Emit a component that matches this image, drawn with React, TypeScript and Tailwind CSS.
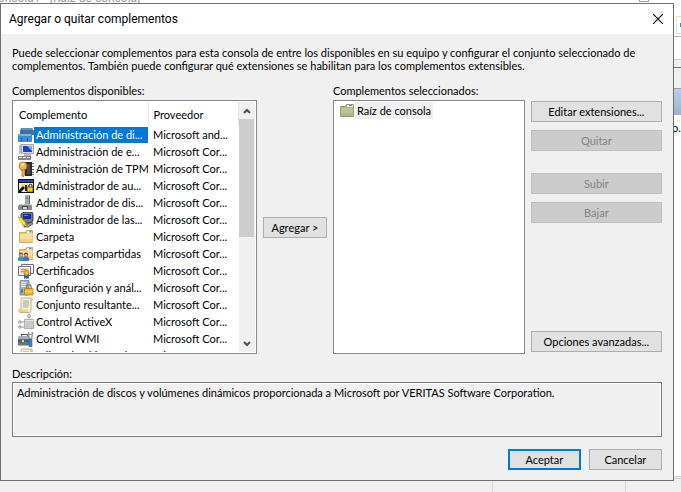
import type { ReactNode } from "react";

function Icon({ children }: { children: ReactNode }) {
  return (
    <svg viewBox="0 0 16 16" className="size-4 shrink-0" aria-hidden="true">
      {children}
    </svg>
  );
}

const DiskIcon = () => (
  <Icon>
    <path d="M3 1h11l2 3v4H2V4z" fill="#3f7396" />
    <path d="M3 1h11l1 2H2.500z" fill="#5b93b5" />
    <rect x="0" y="7" width="14" height="8" rx="1" fill="#3b8fd0" />
    <rect x="1" y="7" width="12" height="2" fill="#6fb8ea" />
    <rect x="3" y="11" width="1" height="3" fill="#1d5f9a" />
    <rect x="9" y="11" width="1" height="3" fill="#1d5f9a" />
  </Icon>
);

const ComputerIcon = () => (
  <Icon>
    <path d="M1 1l3-1v9l-3 1z" fill="#b9bdc0" />
    <rect x="3.500" y="0.500" width="12" height="9" fill="#d9dde0" stroke="#a5a9ad" />
    <rect x="5" y="2" width="9" height="6" fill="#1c3fc4" />
    <path d="M9 2h5v5z" fill="#7fa4f4" />
    <rect x="6" y="10" width="7" height="2" fill="#b5b9bd" />
    <rect x="0" y="12" width="13" height="4" fill="#85898d" />
    <path d="M1 13h3v1H1zM5 13h3v1H5zM9 13h3v1H9z" fill="#e2e4e6" />
  </Icon>
);

const TpmIcon = () => (
  <Icon>
    <rect x="7" y="1" width="7" height="14" fill="#2a2a2a" />
    <path d="M9 3h3v10H9z" fill="#4c4c4c" />
    <path d="M14 2h2v1h-2zM14 5h2v1h-2zM14 8h2v1h-2zM14 11h2v1h-2zM14 13h2v1h-2z" fill="#666" />
    <path d="M3.500 7h3v7l-1.500 2-1.500-1.500 1-1-1-1 1-1-1-1z" fill="#f0a62c" stroke="#a8651a" strokeWidth=".6" />
    <circle cx="5" cy="5" r="4" fill="#f6b540" stroke="#b16d1c" strokeWidth=".8" />
    <circle cx="4.500" cy="3.500" r="1.200" fill="#fff" />
  </Icon>
);

const AuthorizationIcon = () => (
  <Icon>
    <rect x="0" y="1" width="16" height="14" fill="#111" />
    <rect x="1" y="2" width="14" height="2" fill="#2741c8" />
    <rect x="1" y="5" width="14" height="9" fill="#f4f0c4" />
    <path d="M1 12l4-4 2 2-4 4H1z" fill="#111" />
    <path d="M4 6l2 1-2 2z" fill="#e8c800" />
    <path d="M11 9V7a2 2 0 0 1 3 0v2" fill="none" stroke="#222" />
    <rect x="9" y="9" width="6" height="5" fill="#f5cf1c" stroke="#332d00" strokeWidth=".7" />
    <path d="M7 7h2v6H7z" fill="#222" />
  </Icon>
);

const DeviceIcon = () => (
  <Icon>
    <path d="M7 0h4l1 1v9H7z" fill="#a2a6a7" />
    <path d="M11 0l1 1v9h-1z" fill="#5f6465" />
    <rect x="8" y="2" width="2" height="2" fill="#20bb54" />
    <path d="M2 9h11l1 2v4H0v-4z" fill="#8b8f90" />
    <path d="M2 9h11v1H1z" fill="#c4c7c8" />
    <rect x="4" y="11" width="6" height="3" fill="#3e4243" />
    <rect x="5" y="12" width="4" height="2" fill="#d4d6d6" />
  </Icon>
);

const PolicyIcon = () => (
  <Icon>
    <path d="M3 2l3-2h8l1 2v7l-3 2H5L3 9z" fill="#777b86" stroke="#20222b" strokeWidth=".8" />
    <path d="M5 2h8v5H5z" fill="#1828a8" />
    <path d="M6 3h4v1H6z" fill="#5e7df0" />
    <path d="M6 13l8-3 1 2-5 3H6z" fill="#8f929b" stroke="#222" strokeWidth=".6" />
    <path d="M0 5l5 1-1 1 4 4-1 1 4 3-7-2 1-1-4-4 1-1z" fill="#ffe81a" stroke="#8d7a00" strokeWidth=".5" />
  </Icon>
);

const FolderShape = () => (
  <>
    <path d="M1.500 3.500h6l1-2h6v12h-13z" fill="#edc673" stroke="#c79b4c" strokeWidth=".8" />
    <path d="M9.500 2h4v2h-4z" fill="#fff" />
    <path d="M11 2h2.500v1.500H11z" fill="#4c9be0" />
    <path d="M2 5h6l1-1h5.500v9H2z" fill="#f8df9f" />
    <path d="M2 10h12.500v3H2z" fill="#f1cf86" />
  </>
);

const FolderIcon = () => (
  <Icon>
    <FolderShape />
  </Icon>
);

const SharedFolderIcon = () => (
  <Icon>
    <FolderShape />
    <path d="M0 15v-3l2-2h2l2 2v3z" fill="#3f9aa8" />
    <path d="M5 15v-3l2-2h2l2 2v3z" fill="#3b78b8" />
    <circle cx="3" cy="8.500" r="2" fill="#7d4f32" />
    <circle cx="3" cy="9.200" r="1.200" fill="#e9b890" />
    <circle cx="8" cy="8.500" r="2" fill="#5e3d2b" />
    <circle cx="8" cy="9.200" r="1.200" fill="#e9b890" />
  </Icon>
);

const CertificateIcon = () => (
  <Icon>
    <path d="M3.500 1.500h12v9h-12z" fill="#f4f4f2" stroke="#6a6f86" />
    <path d="M.5 3.500h12v9H.5z" fill="#fff" stroke="#6a6f86" />
    <path d="M2 5h9v6H2z" fill="#e9ddb3" />
    <path d="M3 6h6v1H3zM3 8h3v1H3z" fill="#b89a55" />
    <path d="M6 11l3 1v4l-1.500-1L6 16zM9 11l2 0v5l-1-1-1 1z" fill="#2465c8" />
    <circle cx="8.500" cy="9.800" r="2.600" fill="#f3a21d" stroke="#b87410" strokeWidth=".6" />
    <circle cx="8.500" cy="9.800" r="1" fill="#ffd765" />
  </Icon>
);

const ServerLockIcon = () => (
  <Icon>
    <path d="M2 1l2-1h6l1 1v13l-1 1H2z" fill="#9fb2bd" stroke="#5b6c77" strokeWidth=".7" />
    <path d="M3 2h5v1H3zM3 4h5v1H3zM3 6h5v1H3z" fill="#e8f0f3" />
    <path d="M3 9h2v4H3z" fill="#657985" />
    <path d="M8.500 9V7a2.300 2.300 0 0 1 4.600 0v2" fill="none" stroke="#8b8169" strokeWidth="1.300" />
    <rect x="6.500" y="8.500" width="8.500" height="6.500" rx=".7" fill="#f0b72d" stroke="#a97412" strokeWidth=".8" />
    <path d="M7 11h8v1H7z" fill="#ffda70" />
  </Icon>
);

const ScrollIcon = () => (
  <Icon>
    <path d="M4 1h9c2 0 2 3 0 3v9c0 2-1 2.500-2 2.500H2C0 15 1 12 2 12h1V3c0-1 0-2 1-2z" fill="#fbf2cc" stroke="#b79f62" strokeWidth=".8" />
    <path d="M12 1.500c2 0 2.500 2.500.5 2.500z" fill="#d7bd79" />
    <path d="M2 12.500h8v2.500H2z" fill="#e8d397" />
    <path d="M5 4h6M5 6h6M5 8h6M5 10h5" stroke="#8e96b8" strokeWidth=".9" />
  </Icon>
);

const ActiveXIcon = () => (
  <Icon>
    <path d="M11 3v3M2 8h5M2 13h5" stroke="#9a9a9a" />
    <rect x="6.500" y="5.500" width="9" height="9" fill="#cbcbcb" stroke="#b0b0b0" />
    <path d="M7 6h8v1H7z" fill="#e5e5e5" />
    <circle cx="11" cy="2" r="1.500" fill="#ddd" stroke="#8f8f8f" strokeWidth=".8" />
    <circle cx="1.800" cy="8" r="1.300" fill="#ddd" stroke="#8f8f8f" strokeWidth=".8" />
    <circle cx="1.800" cy="13" r="1.300" fill="#ddd" stroke="#8f8f8f" strokeWidth=".8" />
  </Icon>
);

const ToolboxIcon = () => (
  <Icon>
    <path d="M3.500 5V3.500h6V5" fill="none" stroke="#555c63" strokeWidth="1.200" />
    <path d="M0 6l2-1h10l2 1v8.500H0z" fill="#66727c" />
    <path d="M0 6l2-1h10l2 1v2H0z" fill="#a2afb8" />
    <path d="M0 9.500h14v1H0z" fill="#3f4a53" />
    <path d="M4 9h2v2H4z" fill="#d3d9dd" />
    <path d="M11 1a2.500 2.500 0 0 0 0 4v3h3V5a2.500 2.500 0 0 0 0-4v2.500h-3z" fill="#d7dde1" stroke="#69737b" strokeWidth=".7" />
    <rect x="11" y="8" width="3" height="8" rx="1" fill="#3b86d2" stroke="#1f5b9e" strokeWidth=".6" />
  </Icon>
);

const ConsoleFolderIcon = () => (
  <Icon>
    <path d="M1.500 3.500h5l1-2h7v12h-13z" fill="#b6b88c" stroke="#8f9270" strokeWidth=".9" />
    <path d="M8 2h6v2H8z" fill="#dfe8ea" />
    <path d="M10 2h3v1h-3z" fill="#3f93d8" />
    <path d="M2 5h12v8H2z" fill="#bcc39a" />
    <path d="M2 10h12v3H2z" fill="#b3b78a" />
  </Icon>
);

const MS = "Microsoft Cor...";

const snapIns = [
  { name: "Administración de di...", vendor: "Microsoft and...", icon: <DiskIcon />, selected: true },
  { name: "Administración de e...", vendor: MS, icon: <ComputerIcon /> },
  { name: "Administración de TPM", vendor: MS, icon: <TpmIcon /> },
  { name: "Administrador de au...", vendor: MS, icon: <AuthorizationIcon /> },
  { name: "Administrador de dis...", vendor: MS, icon: <DeviceIcon /> },
  { name: "Administrador de las...", vendor: MS, icon: <PolicyIcon /> },
  { name: "Carpeta", vendor: MS, icon: <FolderIcon /> },
  { name: "Carpetas compartidas", vendor: MS, icon: <SharedFolderIcon /> },
  { name: "Certificados", vendor: MS, icon: <CertificateIcon /> },
  { name: "Configuración y anál...", vendor: MS, icon: <ServerLockIcon /> },
  { name: "Conjunto resultante...", vendor: MS, icon: <ScrollIcon /> },
  { name: "Control ActiveX", vendor: MS, icon: <ActiveXIcon /> },
  { name: "Control WMI", vendor: MS, icon: <ToolboxIcon /> },
  { name: "Editor de objetos de...", vendor: MS, icon: <ScrollIcon /> },
];

function PushButton({ children, disabled, primary }: { children: ReactNode; disabled?: boolean; primary?: boolean }) {
  const look = disabled
    ? "border border-[#bfbfbf] bg-[#cccccc] text-[#838383]"
    : primary
      ? "border-2 border-[#0078d7] bg-[#e1e1e1]"
      : "border border-[#adadad] bg-[#e1e1e1]";
  return (
    <button type="button" disabled={disabled} className={`flex h-[21px] w-full items-center justify-center whitespace-nowrap ${look}`}>
      {children}
    </button>
  );
}

function ScrollArrow({ label, d }: { label: string; d: string }) {
  return (
    <button type="button" aria-label={label} className="flex h-[17px] shrink-0 items-center justify-center">
      <svg viewBox="0 0 8 6" className="h-[6px] w-2">
        <path d={d} fill="none" stroke="#505050" strokeWidth="2" />
      </svg>
    </button>
  );
}

function AvailableList() {
  return (
    <div className="flex h-[254px] overflow-hidden border border-[#828790] bg-white p-px">
      <div className="min-w-0 grow overflow-hidden">
        <table aria-labelledby="available" className="w-full table-fixed border-collapse whitespace-nowrap text-left">
          <thead>
            <tr className="h-6">
              <th className="w-[134px] border-r border-[#e5e5e5] p-0 pl-[5px] font-normal">Complemento</th>
              <th className="border-r border-[#e5e5e5] p-0 pl-[5px] font-normal">Proveedor</th>
            </tr>
          </thead>
          <tbody>
            {snapIns.map((s) => (
              <tr key={s.name} className="h-[17px]" aria-selected={s.selected}>
                <td className="overflow-hidden p-0">
                  <div className="flex h-[17px] items-center pl-1">
                    {s.icon}
                    <span className={`flex h-4 grow items-center pl-0.5 ${s.selected ? "bg-[#0078d7] text-white" : ""}`}>
                      {s.name}
                    </span>
                  </div>
                </td>
                <td className="overflow-hidden p-0 pl-[5px]">{s.vendor}</td>
              </tr>
            ))}
          </tbody>
        </table>
      </div>
      <div className="flex w-4 shrink-0 flex-col bg-[#f0f0f0]">
        <ScrollArrow label="Desplazar hacia arriba" d="M1 5l3-3 3 3" />
        <div className="mr-px h-[118px] bg-[#cdcdcd]" />
        <div className="grow" />
        <ScrollArrow label="Desplazar hacia abajo" d="M1 1l3 3 3-3" />
      </div>
    </div>
  );
}

function Dialog() {
  return (
    <section role="dialog" aria-labelledby="title" className="min-w-0 grow border border-[#6e6e6e] bg-[#f0f0f0]">
      <header className="flex h-[30px] items-center justify-between bg-white pl-2 pr-2.5">
        <h1 id="title" className="font-['Roboto',sans-serif] text-[12px]">
          Agregar o quitar complementos
        </h1>
        <button type="button" aria-label="Cerrar">
          <svg viewBox="0 0 10 10" className="size-2.5">
            <path d="M0 0l10 10M10 0L0 10" stroke="#111" strokeWidth="1.200" />
          </svg>
        </button>
      </header>
      <div className="px-[11px] pb-2.5 pt-3">
        <p>
          Puede seleccionar complementos para esta consola de entre los disponibles en su equipo y configurar el conjunto
          seleccionado de <br />
          complementos. También puede configurar qué extensiones se habilitan para los complementos extensibles.
        </p>
        <div className="mt-3 grid grid-cols-[245fr_64px_192fr_131px] gap-x-1.5 gap-y-[3px]">
          <h2 id="available">Complementos disponibles:</h2>
          <h2 id="chosen" className="col-start-3 whitespace-nowrap">
            Complementos seleccionados:
          </h2>
          <div className="col-start-1">
            <AvailableList />
          </div>
          <div className="flex items-center">
            <PushButton>Agregar &gt;</PushButton>
          </div>
          <ul aria-labelledby="chosen" className="border border-[#828790] bg-white p-px">
            <li className="flex items-center pl-1">
              <ConsoleFolderIcon />
              <span className="flex h-[17px] items-center bg-[#f0f0f0] px-0.5">Raíz de consola</span>
            </li>
          </ul>
          <div className="flex flex-col gap-2 pb-0.5 pt-px">
            <PushButton>Editar extensiones...</PushButton>
            <PushButton disabled>Quitar</PushButton>
            <div className="mt-3.5">
              <PushButton disabled>Subir</PushButton>
            </div>
            <PushButton disabled>Bajar</PushButton>
            <div className="mt-auto">
              <PushButton>Opciones avanzadas...</PushButton>
            </div>
          </div>
        </div>
        <label htmlFor="description" className="mt-[13px] block">
          Descripción:
        </label>
        <div className="mt-0.5 flex border border-[#7a7a7a]">
          <textarea
            id="description"
            readOnly
            className="h-[53px] grow resize-none border border-white px-[3px] py-0.5 outline-none"
            defaultValue="Administración de discos y volúmenes dinámicos proporcionada a Microsoft por VERITAS Software Corporation."
          />
        </div>
        <div className="mt-3 flex justify-end gap-2">
          <div className="w-[73px]">
            <PushButton primary>Aceptar</PushButton>
          </div>
          <div className="w-[73px]">
            <PushButton>Cancelar</PushButton>
          </div>
        </div>
      </div>
    </section>
  );
}

export default function App() {
  return (
    <main className="flex min-h-screen flex-col overflow-hidden bg-[#f0f0f0] font-['Lato','Open_Sans',sans-serif] text-[11px] leading-[13px] text-black">
      <div className="flex h-[3px] items-start justify-between overflow-hidden bg-white pr-8">
        <span className="-ml-2.5 -mt-2 whitespace-nowrap font-['Roboto',sans-serif] text-[12px] text-[#999]">
          Consola1 - [Raíz de consola]
        </span>
        <span className="-mt-2 size-2.5 shrink-0 border border-[#999]" />
      </div>
      <div className="flex">
        <Dialog />
        <div className="flex w-[7px] shrink-0 flex-col overflow-hidden bg-white">
          <div className="ml-0.5 mt-[13px] flex h-[18px] items-center justify-end border border-r-0 border-[#e0e0e0]">
            <span className="h-1 w-px bg-[#5d7fa0]" />
          </div>
          <div className="mt-0.5 h-[23px] border-t border-[#b5b5b5]" />
          <div className="h-2 border-t border-[#d0d0d0] bg-[#f0f0f0]" />
          <div className="h-[21px] border-t border-[#6e6e6e] bg-[#f0f0f0]" />
          <div className="h-[27px] border-t border-[#a0a0a0] bg-linear-to-b from-[#b9d1ea] to-[#99b4d1]" />
          <div className="mt-1.5 flex justify-end">o.</div>
          <div className="mt-auto h-[5px] border-t border-[#d5d5d5] bg-[#f0f0f0] pt-px">
            <div className="border-t border-[#d5d5d5]" />
          </div>
        </div>
      </div>
      <div className="flex grow justify-end pr-[55px]">
        <div className="w-[134px] border-x border-[#d7d7d7]" />
      </div>
    </main>
  );
}
